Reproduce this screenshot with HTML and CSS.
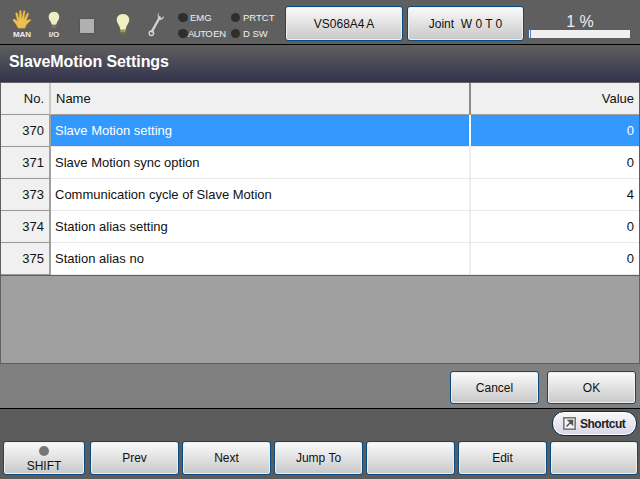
FILE: index.html
```html
<!DOCTYPE html>
<html lang="en">
<head>
<meta charset="utf-8">
<title>SlaveMotion Settings</title>
<link rel="stylesheet" href="styles.css">
</head>
<body>
<div class="screen">
  <header class="topbar">
    <div class="icon-cell hand-cell">
      <svg viewBox="0 0 24 24" width="21" height="21"><path d="M7 22 C5 18 3 15 1 13 C1 11 3 11 5 13 L6 14 L4 5 C4 3.500 6 3.500 6.500 5 L8 11 L8.500 2.500 C8.500 1 10.500 1 10.800 2.500 L11.300 10.500 L13 2.500 C13.500 1 15.300 1.500 15 3 L14 11 L17 5 C18 3.700 19.500 4.500 19 6 L16.500 13 C18 12.500 20 11.500 22 12 C22 13.500 18 15.500 16 19 L15 22 Z" fill="#ecc050" stroke="#b98a2a" stroke-width=".4"/></svg>
      <span class="icon-label">MAN</span>
    </div>
    <div class="icon-cell io-cell">
      <svg viewBox="0 0 16 22" width="14" height="19"><path d="M8 1 C3.500 1 1.500 4.500 2 8 C2.500 11 5 12.500 5.500 16 L10.500 16 C11 12.500 13.500 11 14 8 C14.500 4.500 12.500 1 8 1 Z" fill="#eeeec4"/><rect x="5.500" y="16" width="5" height="4" fill="#7c7452"/></svg>
      <span class="icon-label">I/O</span>
    </div>
    <div class="stop"></div>
    <svg class="bulb" viewBox="0 0 18 26" width="16" height="23"><path d="M9 1 C4 1 1.500 4.500 2 8.500 C2.500 12 5.500 14 6 19 L12 19 C12.500 14 15.500 12 16 8.500 C16.500 4.500 14 1 9 1 Z" fill="#f0f0c0"/><rect x="6" y="19" width="6" height="3" fill="#a09a5c"/><rect x="7" y="22" width="4" height="3" fill="#6e6a48"/></svg>
    <svg class="wrench" viewBox="0 0 18 28" width="17" height="26"><path d="M3.500 23 L13 6" stroke="#d4d4d4" stroke-width="2.400" fill="none"/><path d="M11.500 2 L11.300 6 L14 8 L17 5.500 C17 8.500 15 10 12.500 9.500 C10 8.500 9.500 4 11.500 2 Z" fill="#d4d4d4"/><circle cx="3.500" cy="24" r="2.400" fill="none" stroke="#d4d4d4" stroke-width="1.500"/></svg>
    <div class="lamps">
      <div class="lamp"><i></i>EMG</div>
      <div class="lamp lamp-b"><i></i>PRTCT</div>
      <div class="lamp lamp-tight"><i></i>AUTO EN</div>
      <div class="lamp lamp-b"><i></i>D SW</div>
    </div>
    <button class="btn top-btn robot">VS068A4 A</button>
    <button class="btn top-btn mode">Joint&nbsp; W 0 T 0</button>
    <div class="speed">
      <div class="speed-text">1 %</div>
      <div class="speed-bar"><div class="speed-fill"></div></div>
    </div>
  </header>
  <h1 class="title">SlaveMotion Settings</h1>
  <main class="panel">
    <div class="grid">
      <div class="row head"><div class="no">No.</div><div class="name">Name</div><div class="value">Value</div></div>
      <div class="row selected"><div class="no">370</div><div class="name">Slave Motion setting</div><div class="value">0</div></div>
      <div class="row"><div class="no">371</div><div class="name">Slave Motion sync option</div><div class="value">0</div></div>
      <div class="row"><div class="no">373</div><div class="name">Communication cycle of Slave Motion</div><div class="value">4</div></div>
      <div class="row"><div class="no">374</div><div class="name">Station alias setting</div><div class="value">0</div></div>
      <div class="row"><div class="no">375</div><div class="name">Station alias no</div><div class="value">0</div></div>
    </div>
    <div class="empty"></div>
  </main>
  <div class="actions">
    <button class="btn act-btn">Cancel</button>
    <button class="btn act-btn">OK</button>
  </div>
  <footer class="bottom">
    <div class="shortcut-row">
      <button class="shortcut">
        <svg viewBox="0 0 13 13" width="13" height="13"><rect x=".8" y=".8" width="11.400" height="11.400" fill="#f4f4f4" stroke="#777" stroke-width="1.600"/><path d="M3.500 9.500 L8 5 M5.500 3.500 L9.500 3.500 L9.500 7.500 Z" stroke="#555" stroke-width="1.500" fill="#555"/></svg>
        Shortcut
      </button>
    </div>
    <div class="fn-row">
      <button class="btn fn shift"><i class="shift-led"></i>SHIFT</button>
      <button class="btn fn">Prev</button>
      <button class="btn fn">Next</button>
      <button class="btn fn">Jump To</button>
      <button class="btn fn"></button>
      <button class="btn fn">Edit</button>
      <button class="btn fn fn-last"></button>
    </div>
  </footer>
</div>
</body>
</html>
```
FILE: styles.css
```css
* { box-sizing: border-box; }
html, body { margin: 0; padding: 0; }
body { width: 640px; height: 479px; overflow: hidden; background: #5c5c5c; font-family: "Liberation Sans", Arial, sans-serif; font-size: 13px; color: #111; }
.screen { width: 640px; height: 479px; display: flex; flex-direction: column; }
button { font-family: inherit; margin: 0; }

.topbar { height: 45px; flex: none; background: #5f5f5f; border-bottom: 1px solid #000; display: flex; align-items: flex-start; }
.icon-cell { display: flex; flex-direction: column; align-items: center; flex: none; }
.hand-cell { width: 24px; margin: 9px 0 0 10px; }
.io-cell { width: 20px; margin: 11px 0 0 10px; }
.icon-label { font-size: 8px; line-height: 8px; font-weight: bold; color: #eee; margin-top: 1px; }
.stop { width: 14px; height: 14px; margin: 19px 0 0 16px; background: #b0b0b0; box-shadow: 0 0 2px #444; flex: none; }
.bulb { margin: 13px 0 0 21px; flex: none; }
.wrench { margin: 11px 0 0 17px; flex: none; }
.lamps { width: 102px; margin: 9px 0 0 13px; display: grid; grid-template-columns: 53px 49px; grid-auto-rows: 16px; flex: none; }
.lamp { display: flex; align-items: center; font-size: 9.500px; color: #f0f0f0; white-space: nowrap; }
.lamp i { width: 10px; height: 9px; border-radius: 50%; background: #2e2e2e; margin-right: 2px; flex: none; }
.lamp-tight { letter-spacing: -.5px; word-spacing: -1px; }
.lamp-tight i { margin-right: 0; }
.lamp-b i { width: 9px; margin-right: 3px; }
.btn { border: 1px solid #0a4a80; border-radius: 3px; background: linear-gradient(#fbfbfb, #c8c8c8); box-shadow: inset 0 0 0 1px #eee; color: #111; font-size: 12px; padding: 0; }
.top-btn { height: 35px; margin-top: 6px; flex: none; }
.robot { width: 118px; margin-left: 5px; margin-right: 4px; word-spacing: -1px; }
.mode { width: 117px; }
.speed { width: 102px; margin: 13px 0 0 5px; display: flex; flex-direction: column; align-items: center; flex: none; }
.speed-text { font-size: 16px; line-height: 17px; color: #eee; height: 17px; }
.speed-bar { width: 101px; height: 8px; background: #f0f0f0; align-self: flex-start; }
.speed-fill { width: 1px; height: 8px; background: #3d8fe0; margin-left: 1px; }

.title { height: 37px; flex: none; margin: 0; padding: 0 9px 3px; background: linear-gradient(#5f5f5f, #33334d); color: #fff; font-size: 16px; font-weight: bold; letter-spacing: -.1px; display: flex; align-items: center; }

.panel { height: 282px; flex: none; border: 1px solid #606060; display: flex; flex-direction: column; background: #a0a0a0; }
.grid { flex: none; background: #fff; border-bottom: 1px solid #606060; }
.row { display: grid; grid-template-columns: 50px 420px 1fr; height: 32px; border-bottom: 1px solid #e8e8e8; align-items: stretch; }
.row > div { display: flex; align-items: center; white-space: nowrap; }
.no { justify-content: flex-end; padding-right: 5px; background: #f0f0f0; border-right: 2px solid #a0a0a0; border-bottom: 1px solid #999; margin-bottom: -1px; }
.name { padding-left: 4px; border-right: 2px solid #eee; position: relative; }
.value { justify-content: flex-end; padding-right: 5px; }
.head { border-bottom: 1px solid #a0a0a0; }
.head > div { background: #f0f0f0; }
.head .no { border-right: 2px solid #c8c8c8; }
.head .name { border-right: 2px solid #8a8a8a; padding-left: 5px; }
.selected .name, .selected .value { background: #3399ff; color: #fff; }
.selected .name { border-right-color: #fff; }
.selected .name::after { content: ""; position: absolute; inset: 0; border: 1px dotted #c86a20; }
.empty { flex: 1; }

.actions { height: 45px; flex: none; background: #808080; border-bottom: 1px solid #000; display: flex; justify-content: flex-end; gap: 8px; padding: 7px 4px 0 0; }
.act-btn { width: 89px; height: 33px; }

.bottom { flex: 1; background: #5c5c5c; display: flex; flex-direction: column; }
.shortcut-row { height: 32px; display: flex; justify-content: flex-end; padding: 2px 3px 0 0; flex: none; }
.shortcut { width: 85px; height: 25px; border: 1px solid #0a2a50; border-radius: 12px; background: linear-gradient(#f8f8fa, #d8d6e8); box-shadow: inset 0 0 0 1px #fff; color: #222; font-size: 12px; font-weight: bold; letter-spacing: -.5px; padding: 0 0 0 4px; display: flex; align-items: center; gap: 4px; white-space: nowrap; }
.shortcut svg { flex: none; margin-left: 6px; }
.fn-row { display: flex; gap: 3px; padding-left: 3px; }
.fn { width: 89px; height: 34px; flex: none; }
.fn-last { width: 88px; }
.shift { width: 82px; margin-right: 2px; display: flex; flex-direction: column; align-items: center; }
.shift-led { width: 10px; height: 10px; border-radius: 50%; background: #777; margin: 4px 0 3px; }
```
